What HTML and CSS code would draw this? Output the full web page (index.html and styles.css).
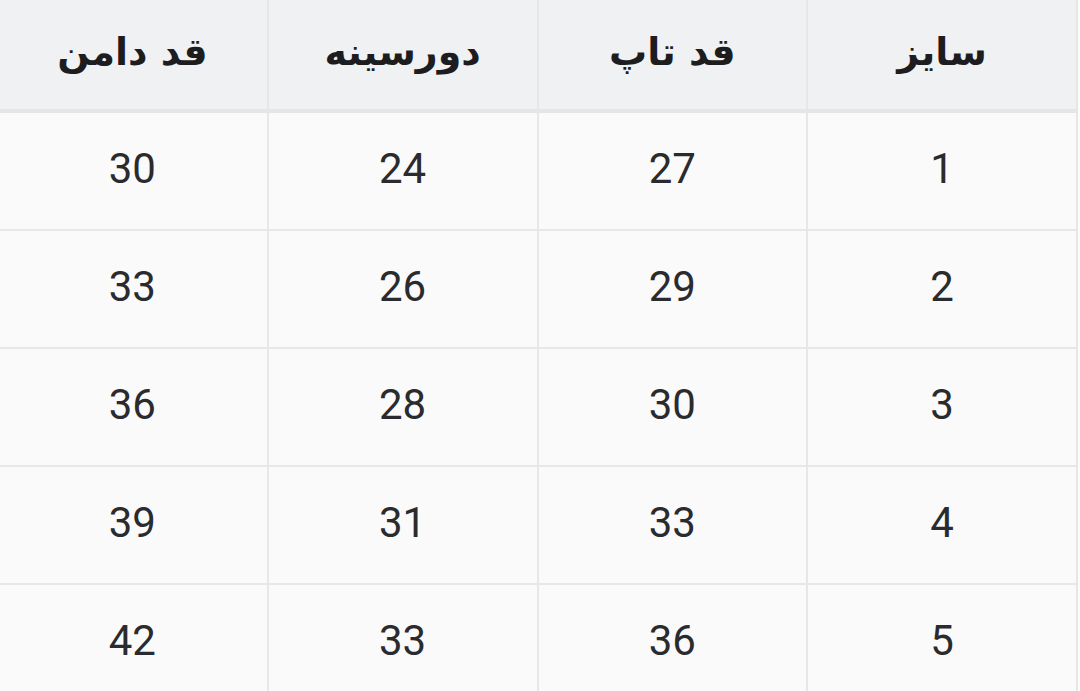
FILE: index.html
```html
<!DOCTYPE html>
<html lang="fa" dir="rtl">
<head>
<meta charset="utf-8">
<link rel="stylesheet" href="styles.css">
</head>
<body>
<table class="size-table">
  <thead>
    <tr><th>سایز</th><th>قد تاپ</th><th>دورسینه</th><th>قد دامن</th></tr>
  </thead>
  <tbody>
    <tr><td>1</td><td>27</td><td>24</td><td>30</td></tr>
    <tr><td>2</td><td>29</td><td>26</td><td>33</td></tr>
    <tr><td>3</td><td>30</td><td>28</td><td>36</td></tr>
    <tr><td>4</td><td>33</td><td>31</td><td>39</td></tr>
    <tr><td>5</td><td>36</td><td>33</td><td>42</td></tr>
  </tbody>
</table>
</body>
</html>
```
FILE: styles.css
```css
html, body {
  margin: 0;
  padding: 0;
  background: #fcfcfc;
}
body {
  direction: rtl;
  overflow: hidden;
}
.size-table {
  width: 1080px;
  margin-right: 2px;
  border-collapse: collapse;
  table-layout: fixed;
  background: #fafafa;
}
.size-table th,
.size-table td {
  border: 2px solid #e7e7e8;
  text-align: center;
  padding: 0;
}
.size-table th {
  background: #f0f1f3;
  height: 103px;
  padding-bottom: 6px;
  font-family: "DejaVu Sans", "Noto Sans", sans-serif;
  font-weight: bold;
  font-size: 38px;
  color: #1d1d1f;
  border-top: 0;
  border-bottom: 4px solid #e4e5e7;
}
.size-table td {
  height: 110px;
  padding-bottom: 6px;
  font-family: Roboto, "Liberation Sans", sans-serif;
  font-size: 42px;
  color: #2a2b2e;
}
.size-table tr > :last-child {
  border-left: 0;
}
```
